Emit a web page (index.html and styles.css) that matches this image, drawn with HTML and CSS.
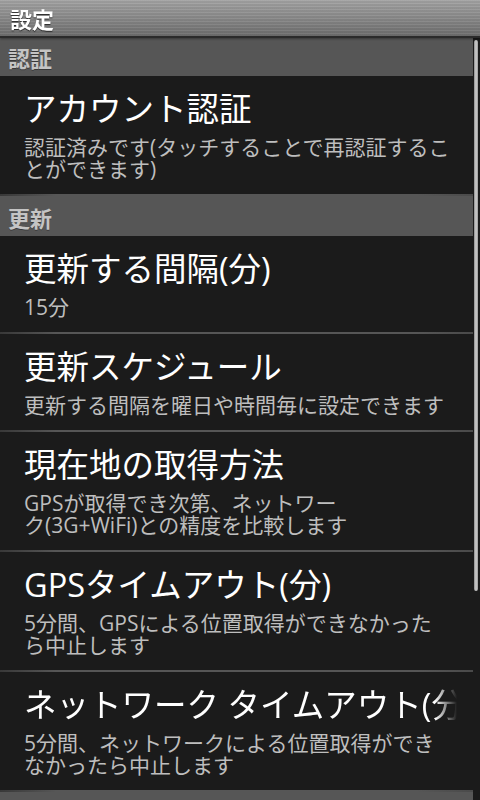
FILE: index.html
```html
<!DOCTYPE html>
<html lang="ja">
<head>
<meta charset="utf-8">
<title>設定</title>
<link rel="stylesheet" href="styles.css">
</head>
<body>
<header class="titlebar">設定</header>
<main class="list">
  <div class="cat">認証</div>
  <div class="pref">
    <div class="pref-title">アカウント認証</div>
    <div class="pref-summary">認証済みです(タッチすることで再認証するこ<br>とができます)</div>
  </div>
  <div class="cat">更新</div>
  <div class="pref">
    <div class="pref-title">更新する間隔(分)</div>
    <div class="pref-summary">15分</div>
  </div>
  <div class="pref">
    <div class="pref-title">更新スケジュール</div>
    <div class="pref-summary">更新する間隔を曜日や時間毎に設定できます</div>
  </div>
  <div class="pref">
    <div class="pref-title">現在地の取得方法</div>
    <div class="pref-summary">GPSが取得でき次第、ネットワー<br>ク(3G+WiFi)との精度を比較します</div>
  </div>
  <div class="pref">
    <div class="pref-title">GPSタイムアウト(分)</div>
    <div class="pref-summary">5分間、GPSによる位置取得ができなかった<br>ら中止します</div>
  </div>
  <div class="pref">
    <div class="pref-title pref-title-fade">ネットワーク タイムアウト(分)</div>
    <div class="pref-summary">5分間、ネットワークによる位置取得ができ<br>なかったら中止します</div>
  </div>
  <div class="cat"></div>
</main>
<div class="scroll-thumb"></div>
</body>
</html>
```
FILE: styles.css
```css
html, body {
  margin: 0;
  padding: 0;
}
body {
  background: #1b1b1b;
  font-family: "Open Sans", "Noto Sans CJK JP", sans-serif;
  overflow: hidden;
  height: 800px;
}
.titlebar {
  position: relative;
  z-index: 1;
  height: 36px;
  box-sizing: border-box;
  padding-left: 10px;
  display: flex;
  align-items: center;
  color: #ffffff;
  font-size: 22px;
  font-weight: 700;
  text-shadow: 0 1px 1px rgba(0, 0, 0, 0.7);
  background:
    repeating-linear-gradient(to bottom, rgba(255, 255, 255, 0.05) 0 1px, rgba(0, 0, 0, 0.05) 1px 3px),
    linear-gradient(to bottom, #a4a4a4, #8a8a8a 50%, #6e6e6e);
  box-shadow: 0 2px 0 #2b2b2b, 0 3px 2px rgba(0, 0, 0, 0.35);
}
.list {
  margin-right: 7px;
}
.cat {
  height: 40px;
  box-sizing: border-box;
  padding: 2px 0 0 8px;
  display: flex;
  align-items: center;
  background: #565656;
  color: #c4c4c4;
  font-size: 22px;
  font-weight: 700;
  text-shadow: 0 1px 0 rgba(0, 0, 0, 0.35);
}
.pref {
  padding: 14px 16px 14px 24px;
  border-bottom: 2px solid transparent;
  border-image: linear-gradient(to right, #383838, #565656 12%, #565656 88%, #4a4a4a) 1;
}
.pref-title {
  color: #ffffff;
  font-size: 32.5px;
  line-height: 38px;
  white-space: nowrap;
}
.pref-title-fade {
  overflow: hidden;
  -webkit-mask-image: linear-gradient(to right, #000 calc(100% - 22px), transparent);
  mask-image: linear-gradient(to right, #000 calc(100% - 22px), transparent);
}
.pref-summary {
  margin-top: 8px;
  color: #bebebe;
  font-size: 21px;
  line-height: 22px;
  white-space: nowrap;
}
.scroll-thumb {
  position: fixed;
  top: 40px;
  right: 2px;
  width: 4px;
  height: 551px;
  border-radius: 2px;
  background: linear-gradient(to right, #8c8c8c, #cfcfcf 50%, #9a9a9a);
}
```
